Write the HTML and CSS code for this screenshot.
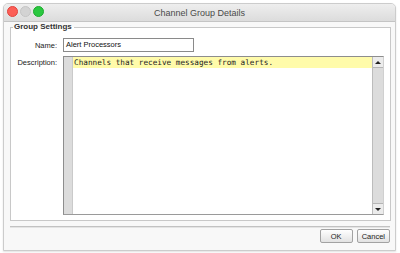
FILE: index.html
```html
<!DOCTYPE html>
<html lang="en">
<head>
  <meta charset="UTF-8" />
  <title>Channel Group Details</title>
  <link rel="stylesheet" href="styles.css">
</head>
<body>
  <div class="window">
    <div class="titlebar">
      <div class="lights">
        <span class="light red"></span>
        <span class="light gray"></span>
        <span class="light green"></span>
      </div>
      <div class="title">Channel Group Details</div>
    </div>
    <div class="content">
      <fieldset class="group">
        <legend>Group Settings</legend>
        <div class="row">
          <label class="label">Name:</label>
          <div class="name-input">Alert Processors</div>
        </div>
        <div class="row desc-row">
          <label class="label">Description:</label>
          <div class="editor">
            <div class="gutter"></div>
            <div class="text">
              <div class="line current">Channels that receive messages from alerts.</div>
            </div>
            <div class="scrollbar">
              <div class="arrow up"></div>
              <div class="track"></div>
              <div class="arrow down"></div>
            </div>
          </div>
        </div>
      </fieldset>
      <div class="separator"></div>
      <div class="buttons">
        <button class="btn ok">OK</button>
        <button class="btn">Cancel</button>
      </div>
    </div>
  </div>
</body>
</html>
```

FILE: styles.css
```css
* {
  box-sizing: border-box;
  margin: 0;
  padding: 0;
}

body {
  background: #ffffff;
  width: 400px;
  height: 253px;
  padding: 3px 4px 2px 3px;
  font-family: 'Liberation Sans', Arial, sans-serif;
}

.window {
  height: 248px;
  border: 1px solid #cccccc;
  border-radius: 5px 5px 0 0;
  background: #f8f8f8;
  display: flex;
  flex-direction: column;
  overflow: hidden;
  box-shadow: 0 1px 2px rgba(0, 0, 0, 0.12);
}

.titlebar {
  height: 18px;
  flex-shrink: 0;
  background: linear-gradient(#eeeeee, #dcdcdc);
  border-bottom: 1px solid #c4c4c4;
  position: relative;
  display: flex;
  align-items: center;
  justify-content: center;
}

.lights {
  position: absolute;
  left: 3px;
  top: 2px;
  display: flex;
  gap: 2px;
}

.light {
  width: 11px;
  height: 11px;
  border-radius: 50%;
}

.red { background: #fc5f57; border: 1px solid #e0443e; }
.gray { background: #d3d3d3; border: 1px solid #c4c4c4; }
.green { background: #2bc840; border: 1px solid #1eaa30; }

.title {
  font-size: 9px;
  color: #4a4a4a;
}

.content {
  flex: 1;
  display: flex;
  flex-direction: column;
  padding: 0 5px 0 6px;
}

.group {
  border: 1px solid #c8c8c8;
  background: #ffffff;
  margin-top: 0;
  padding: 0 6px 5px 6px;
}

.group legend {
  font-size: 8px;
  line-height: 10px;
  font-weight: bold;
  color: #333;
  padding: 0 2px 0 1px;
  margin-left: -4px;
}

.row {
  display: flex;
  align-items: center;
  margin-top: 6px;
}

.label {
  width: 40px;
  text-align: right;
  font-size: 7.5px;
  color: #222;
  margin-right: 6px;
}

.name-input {
  width: 131px;
  height: 14px;
  border: 1px solid #8a8a8a;
  background: #fff;
  font-size: 7.5px;
  line-height: 12px;
  padding-left: 2px;
  color: #111;
}

.desc-row {
  align-items: flex-start;
  margin-top: 4px;
}

.desc-row .label {
  margin-top: 2px;
}

.editor {
  width: 321px;
  height: 159px;
  border: 1px solid #8d8d8d;
  border-right-color: #d0d0d0;
  border-bottom-color: #9a9a9a;
  display: flex;
  background: #fff;
}

.gutter {
  width: 9px;
  background: #dcdcdc;
  border-right: 1px solid #cacaca;
}

.text {
  flex: 1;
}

.line {
  font-family: 'DejaVu Sans Mono', 'Liberation Mono', monospace;
  font-size: 7.7px;
  height: 11px;
  line-height: 11px;
  padding-left: 1px;
  color: #222;
}

.line.current {
  background: #fffbaa;
}

.scrollbar {
  width: 11px;
  display: flex;
  flex-direction: column;
  background: #dcdcdc;
  border-left: 1px solid #bcbcbc;
}

.arrow {
  height: 11px;
  background: #ececec;
  border-bottom: 1px solid #b5b5b5;
  display: flex;
  align-items: center;
  justify-content: center;
}

.arrow.down {
  border-bottom: none;
  border-top: 1px solid #b5b5b5;
}

.arrow::after {
  content: "";
  border-left: 3px solid transparent;
  border-right: 3px solid transparent;
}

.arrow.up::after { border-bottom: 3px solid #222; }
.arrow.down::after { border-top: 3px solid #222; }

.track {
  flex: 1;
}

.separator {
  margin-top: 5px;
  height: 2px;
  background: #c2c2c2;
  border-bottom: 1px solid #e4e4e4;
}

.buttons {
  display: flex;
  justify-content: flex-end;
  gap: 4px;
  margin-top: 1px;
}

.btn {
  font-family: 'Liberation Sans', Arial, sans-serif;
  font-size: 7.5px;
  height: 14px;
  padding: 0 4px;
  min-width: 33px;
  border: 1px solid #a2a2a2;
  border-radius: 2px;
  background: linear-gradient(#ffffff, #e2e2e2);
  color: #222;
}
```
